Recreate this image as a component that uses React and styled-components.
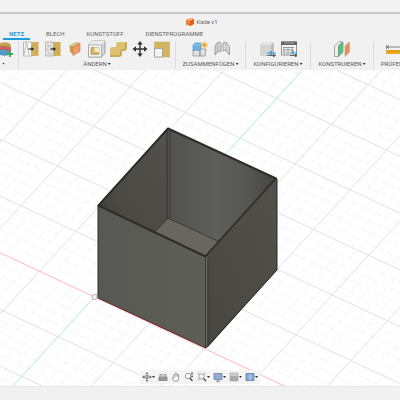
import styled, { createGlobalStyle } from "styled-components";

const GlobalStyle = createGlobalStyle`
  * {
    box-sizing: border-box;
  }
  body {
    margin: 0;
    background: #f1f1f1;
    font-family: Roboto, "Liberation Sans", sans-serif;
    font-size: 6px;
    color: #5a5a5a;
  }
`

const Page = styled.div`
  display: flex;
  flex-direction: column;
  min-height: 100vh;
  overflow: hidden;
`

const WindowEdge = styled.div`
  height: 14px;
  border-bottom: 2px solid #c9c9c9;
  background: #f2f2f2;
`

const TitleBar = styled.header`
  display: flex;
  align-items: center;
  justify-content: center;
  gap: 2px;
  height: 15px;
  padding-left: 4px;
  h1 {
    margin: 0;
    font-size: 6px;
    font-weight: 400;
  }
`

const Tabs = styled.nav`
  display: flex;
  gap: 10px;
  height: 11px;
  padding-left: 3px;
`

const Tab = styled.button`
  flex: none;
  padding: 0 6px;
  border: 0;
  border-bottom: 2px solid ${({$active}) => $active ? "#1f9bd8" : "transparent"};
  background: none;
  color: ${({$active}) => $active ? "#1f9bd8" : "#626262"};
  font: ${({$active}) => $active ? 700 : 400} 6px/9px Roboto, "Liberation Sans", sans-serif;
`

const Toolbar = styled.div`
  display: flex;
  height: 30px;
  padding: 1px 0;
  overflow: hidden;
`

const Group = styled.div`
  display: flex;
  flex: none;
  flex-direction: column;
  align-items: ${({$clipped}) => $clipped ? "flex-end" : "center"};
  width: ${({$width}) => $width}px;
  padding-right: ${({$clipped}) => $clipped ? 5 : 0}px;
  border-right: 1px solid #dcdcdc;
  &:last-child {
    border: 0;
  }
`

const Tools = styled.div`
  display: flex;
  gap: 6px;
`

const IconButton = styled.button`
  display: flex;
  flex: none;
  padding: 0;
  border: 0;
  background: none;
  svg {
    overflow: visible;
  }
`

const GroupMenu = styled.button`
  display: flex;
  align-items: center;
  gap: 1px;
  height: 13px;
  padding: 1px ${({$clipped}) => $clipped ? 8 : 0}px 0 0;
  border: 0;
  background: none;
  color: #5a5a5a;
  font: 400 6px/12px Roboto, "Liberation Sans", sans-serif;
`

const Caret = styled.span`
  width: 3px;
  height: 2px;
  background: #333;
  clip-path: polygon(0 0, 100% 0, 50% 100%);
`

const Canvas = styled.main`
  display: flex;
  flex: 1;
  position: relative;
  background: #fff;
  > svg {
    flex: 1;
    min-width: 0;
  }
`

const ViewBar = styled.div`
  position: absolute;
  bottom: 2px;
  left: 50%;
  display: flex;
  gap: 3px;
  padding: 2px;
  transform: translateX(-50%);
  background: #f4f4f4;
`

const ViewButton = styled(IconButton)`
  align-items: center;
`

const StatusBar = styled.footer`
  height: 14px;
  border-top: 1px solid #e6e6e6;
  background: #f1f1f1;
`

function Icon({size = 16, children}) {
    return (
        <svg width={size} height={size} viewBox={`0 0 ${size} ${size}`} fill="none" aria-hidden="true">
            {children}
        </svg>
    )
}

const gold = "#d3b561"

const meshHalf = (
    <>
        <path d="M8.5 1h7v14h-7z" fill={gold}/>
        <path d="M8.5 6l7-5M8.5 11l7-6M8.5 15l7-6M8.5 2l7 7M10 9l5.500 5" stroke="#b99a45" strokeWidth=".6"/>
    </>
)

const arrow = (
    <>
        <path d="M5.500 8h4" stroke="#222" strokeWidth="1.200"/>
        <path d="M8.500 6l2.500 2-2.500 2z" fill="#222"/>
    </>
)

const icons = {
    faceGroups: (
        <Icon>
            <path d="M1 3q6-3 11-1l2 2v4H1z" fill="#c5a250"/>
            <path d="M1 6q7-2 13 1v3H1z" fill="#d65c5e"/>
            <path d="M1 9q7-2 11 1v4q-6 2-11-1z" fill="#5799c9"/>
            <path d="M1 6q7-2 13 1M1 9q7-2 12 1" stroke="#8b6f50" strokeWidth=".6"/>
            <path d="M13 10v6M10 13h6" stroke="#36a958" strokeWidth="1.800"/>
        </Icon>
    ),
    remesh: (
        <Icon>
            <path d="M.5 1h8v14h-8z" fill="#f7f7f7" stroke="#a5a5a5" strokeWidth=".7"/>
            <path d="M1 14L3.500 1.500 6 14" stroke="#a8a8a8" strokeWidth=".7"/>
            {meshHalf}
            {arrow}
        </Icon>
    ),
    reduce: (
        <Icon>
            <path d="M.5 1h8v14h-8z" fill="#f2f2f2" stroke="#a0a0a0" strokeWidth=".7"/>
            <path d="M1 5h7M1 9h7M1 13h7M3 1v14M6 1v14M1 1l7 8M1 8l6 7M8 1L1 9" stroke="#b0b0b0" strokeWidth=".5"/>
            {meshHalf}
            {arrow}
        </Icon>
    ),
    planeCut: (
        <Icon>
            <path d="M2.500 5L9 1.500 13 2.500 7 6z" fill="#dfc67d" stroke="#a48a48" strokeWidth=".5"/>
            <path d="M2.500 5L7 6v8l-4-3z" fill="#c5a250"/>
            <path d="M5 6.500l8-4v8l-7 4z" fill="#ec9b69" stroke="#b97550" strokeWidth=".6"/>
        </Icon>
    ),
    shell: (
        <Icon>
            <path d="M-.500 4L3 0h13v12L12.500 16H-.500z" fill="#d4d4d4" stroke="#888" strokeWidth=".7"/>
            <path d="M-.500 4L3 0h13l-3.500 4z" fill="#ececec"/>
            <path d="M-.500 4h13v12h-13z" fill="#f7f7f7" stroke="#999" strokeWidth=".7"/>
            <path d="M2 6.500h8v7H2z" fill={gold} stroke="#9b8552" strokeWidth=".6"/>
            <path d="M5.500 6.500H10V11H5.500z" fill="#f3ead0"/>
        </Icon>
    ),
    combine: (
        <Icon>
            <path d="M-1 8l2-2h4V3l2-2h9v7l-2 2h-3v4l-2 2H-1z" fill="#c9a94f"/>
            <path d="M-1 8l2-2h4V3l2-2h9l-2 2v5h-3l-2 2v4h-10z" fill="#dcc074"/>
        </Icon>
    ),
    move: (
        <Icon>
            <path d="M7 2v12M1 8h12" stroke="#333" strokeWidth="1.400"/>
            <path d="M7 0l2.700 3.500H4.300zM7 16l2.700-3.500H4.300zM-.500 8L3 5.300v5.400zM14.500 8L11 5.300v5.400z" fill="#333"/>
        </Icon>
    ),
    scale: (
        <Icon>
            <path d="M-.500 1H14.500v15H-.500z" fill={gold} stroke="#c0a04e" strokeWidth=".5"/>
            <path d="M-.500 7.500h8V16h-8z" fill="#f5f5f5" stroke="#999" strokeWidth=".8"/>
        </Icon>
    ),
    component: (
        <Icon>
            <path d="M1 9h7v6H1zM8 8h6l-1 7H8z" fill="#e1e1e1" stroke="#888" strokeWidth=".7"/>
            <path d="M1 4l2-2h6v6L8 9H1z" fill="#70b4e2" stroke="#458abb" strokeWidth=".6"/>
            <path d="M1 4h6l2-2" stroke="#a7d5f1" strokeWidth=".6"/>
            <path d="M12.500.500v7M9 4h7M10 1.500l5 5M15 1.500l-5 5" stroke="#e2a130" strokeWidth=".8"/>
            <circle cx="12.500" cy="4" r="2" fill="#f5ab25"/>
        </Icon>
    ),
    joint: (
        <Icon>
            <path d="M1 14V5l2-3 3-1 1 2v8l-3-1z" fill="#d2d2d2" stroke="#888" strokeWidth=".7"/>
            <path d="M3.500 2v8.500L1 14" stroke="#999" strokeWidth=".6"/>
            <path d="M15.500 14V6L13 2l-3-1-1 2v7l3-1z" fill="#dcdcdc" stroke="#888" strokeWidth=".7"/>
            <path d="M12 2.500V9l3.500 5" stroke="#999" strokeWidth=".6"/>
        </Icon>
    ),
    configure: (
        <Icon>
            <path d="M1 4l3-3h11v11l-3 3H1z" fill="#bdbdbd"/>
            <path d="M1 4h11v11H1z" fill="#d4d4d4"/>
            <path d="M1 4l3-3h11l-3 3z" fill="#e5e5e5"/>
            <path d="M8 12h9" stroke="#3b91bb" strokeWidth="1"/>
            <path d="M8 14.500h9" stroke="#666" strokeWidth="1"/>
            <path d="M11 10h2v4h-2z" fill="#4ba4cf"/>
            <path d="M14 13h1.500v3H14z" fill="#555"/>
        </Icon>
    ),
    table: (
        <Icon>
            <path d="M.500 1h15v13H.500z" fill="#f6f6f6" stroke="#777" strokeWidth=".8"/>
            <path d="M0 .500h16V4H0z" fill="#666"/>
            <path d="M3 2h10" stroke="#aaa" strokeWidth=".8"/>
            <path d="M3 6v6M7 6v6M11 6v5M2 6.500h11M2 9h11M2 12h7" stroke="#777" strokeWidth=".7"/>
            <path d="M9 12h7" stroke="#3b91bb" strokeWidth="1"/>
            <path d="M9 14.500h7" stroke="#666" strokeWidth="1"/>
            <path d="M11 10h2v3h-2z" fill="#4ba4cf"/>
            <path d="M14 13h1.500v3H14z" fill="#555"/>
        </Icon>
    ),
    plane: (
        <Icon>
            <path d="M.500 5L5 .500h3L4.500 5v10.500h-4z" fill="#eee" stroke="#888" strokeWidth=".7"/>
            <path d="M4.500 5L9 1v10l-4.500 4.500z" fill="#59c184" stroke="#4b9b6c" strokeWidth=".6"/>
            <path d="M11 5l4.500-4v10L11 15.500z" fill="#e58f5d" stroke="#d88c62" strokeWidth=".5"/>
        </Icon>
    ),
    measure: (
        <Icon>
            <path d="M0 9h16v4H0z" fill="#eba91f"/>
            <path d="M2 9v2M4 9v2M6 9v2M8 9v2M10 9v2M12 9v2M14 9v2" stroke="#ad7b20" strokeWidth=".5"/>
            <path d="M.500 4v4M1 6h15M3 4.500L1 6l2 1.500" stroke="#666" strokeWidth=".8"/>
        </Icon>
    ),
}

const viewIcons = {
    orbit: (
        <Icon size={10}>
            <path d="M5 1v8M1 5h8" stroke="#777" strokeWidth=".8"/>
            <ellipse cx="5" cy="5" rx="3" ry="1.500" stroke="#888" strokeWidth=".8"/>
            <path d="M5 0l1.500 2h-3zM5 10l1.500-2h-3zM0 5l2-1.500v3zM10 5L8 3.500v3z" fill="#777"/>
        </Icon>
    ),
    lookAt: (
        <Icon size={10}>
            <path d="M1 5h8v3.500H1z" fill="#aaa" stroke="#777" strokeWidth=".8"/>
            <path d="M2 4.500V2.500h2v2M6 4.500V2.500h2v2M1 7h8" stroke="#888" strokeWidth=".9"/>
        </Icon>
    ),
    pan: (
        <Icon size={10}>
            <path d="M3 9L1 6q0-1 2 0V2.500q.500-1 1 0V1.500q.500-1 1.200 0V2q.500-1 1.200 0v1q.600-.500 1.200 0v3.500L7 9z" fill="#fff" stroke="#777" strokeWidth=".7"/>
            <path d="M4 2.500V5M5.200 2v3M6.400 3v2" stroke="#888" strokeWidth=".5"/>
        </Icon>
    ),
    zoom: (
        <Icon size={10}>
            <circle cx="4" cy="4" r="2.700" fill="#f9f9f9" stroke="#888" strokeWidth=".8"/>
            <path d="M5.800 6l2.700 3" stroke="#444" strokeWidth="1.200"/>
            <path d="M8 1v4M7 2l1-1.500L9 2M7 4l1 1.500L9 4" stroke="#555" strokeWidth=".7"/>
        </Icon>
    ),
    fit: (
        <Icon size={10}>
            <path d="M1 3V1h2M6 1h2v2M1 6v2h2" stroke="#aaa" strokeWidth=".6"/>
            <circle cx="4.500" cy="4.500" r="2.600" fill="#f9f9f9" stroke="#888" strokeWidth=".8"/>
            <path d="M6.500 6.500L9 9" stroke="#444" strokeWidth="1.200"/>
        </Icon>
    ),
    display: (
        <Icon size={10}>
            <path d="M1 1.500h8v6H1z" fill="#8eafd9" stroke="#777c88" strokeWidth=".8"/>
            <path d="M5 8v1M3 9.300h4" stroke="#777" strokeWidth=".8"/>
        </Icon>
    ),
    grid: (
        <Icon size={10}>
            <path d="M1 1h8v8H1z" fill="#aaa"/>
            <path d="M1 1h8v3H1z" fill="#cdcdcd"/>
            <path d="M1 1h8v8H1z" stroke="#999" strokeWidth=".5"/>
        </Icon>
    ),
    viewports: (
        <Icon size={10}>
            <path d="M1 1.500h8v7H1z" fill="#82a9d9" stroke="#61789f" strokeWidth=".8"/>
            <path d="M5 2v6" stroke="#dce8f6" strokeWidth=".8"/>
            <path d="M2 5h6" stroke="#a9c4e6" strokeWidth=".6"/>
        </Icon>
    ),
}

const groups = [
    {label: "", name: "Erstellen", width: 19, clipped: true, tools: ["faceGroups"]},
    {label: "ÄNDERN", width: 157, tools: ["remesh", "reduce", "planeCut", "shell", "combine", "move", "scale"]},
    {label: "ZUSAMMENFÜGEN", width: 70, tools: ["component", "joint"]},
    {label: "KONFIGURIEREN", width: 65, tools: ["configure", "table"]},
    {label: "KONSTRUIEREN", width: 63, tools: ["plane"]},
    {label: "PRÜFEN", width: 40, tools: ["measure"]},
]

const views = [
    ["orbit", true], ["lookAt", false], ["pan", false], ["zoom", false],
    ["fit", true], ["display", true], ["grid", true], ["viewports", true],
]

// ground plane: origin and the two steps from one major line to the next
const origin = [94.5, 297]
const across = [55, 25.8]
const away = [36.4, -39.7]

const point = (a, b) => [
    origin[0] + a * away[0] + b * across[0],
    origin[1] + a * away[1] + b * across[1],
].join(" ")

const gridPath = (keep) => {
    let d = ""
    for (let i = -50; i <= 50; i++) {
        if (!keep(i)) continue
        d += `M${point(i / 5, -10)}L${point(i / 5, 10)}M${point(-10, i / 5)}L${point(10, i / 5)}`
    }
    return d
}

const minor = gridPath(i => i % 5 !== 0)
const major = gridPath(i => i % 5 === 0 && i !== 0)

function Scene() {
    return (
        <svg viewBox="0 70 400 316" preserveAspectRatio="xMidYMid slice" fill="none" role="img" aria-label="Kiste">
            <defs>
                <linearGradient id="innerLeft" x1="0" y1="1" x2="1" y2="0">
                    <stop offset="0" stopColor="#3d3c39"/>
                    <stop offset=".3" stopColor="#4b4944"/>
                    <stop offset="1" stopColor="#53514c"/>
                </linearGradient>
                <linearGradient id="innerRight">
                    <stop offset="0" stopColor="#51514d"/>
                    <stop offset=".45" stopColor="#5e5f5a"/>
                    <stop offset=".75" stopColor="#555651"/>
                    <stop offset="1" stopColor="#454542"/>
                </linearGradient>
                <linearGradient id="front">
                    <stop offset="0" stopColor="#575853"/>
                    <stop offset="1" stopColor="#5f5f59"/>
                </linearGradient>
                <linearGradient id="side" x1="0" y1="1" x2="1" y2="0">
                    <stop offset="0" stopColor="#484641"/>
                    <stop offset="1" stopColor="#545049"/>
                </linearGradient>
            </defs>
            <path d={minor} stroke="#f1f1f1" strokeWidth=".8" strokeDasharray="7 2"/>
            <path d={major} stroke="#d9d9d9" strokeWidth=".8"/>
            <path d={`M${point(0, -5)}L${point(0, 8)}`} stroke="#ffa4a8" strokeWidth=".8"/>
            <path d={`M${point(-5, 0)}L${point(8, 0)}`} stroke="#96f29a" strokeWidth=".8"/>
            <path d="M168 128L276 178V270L206 348 98 298V205z" fill="#4a4945"/>
            <path d="M168 129V218L154 233 98 206z" fill="url(#innerLeft)"/>
            <path d="M168 129L275 179 219 243 168 218z" fill="url(#innerRight)"/>
            <path d="M168 218L220 242 205 257 154 233z" fill="#69665f"/>
            <path d="M98 206L205 257V348L98 298z" fill="url(#front)"/>
            <path d="M208 256L277 179V270L208 347z" fill="url(#side)"/>
            <path d="M205 257L208 256V347L205 348z" fill="#6a6a63"/>
            <path d="M205.500 258V348M207.800 257V346" stroke="#292927" strokeWidth=".8"/>
            <path d="M167.200 131V219M170 131V218M154 233L168 218 220 242" stroke="#30302d" strokeWidth=".8"/>
            <path d="M98.500 205.500L168 128.500 276 178.500 205.500 256.500z" stroke="#2d2d2a" strokeWidth="2" strokeLinejoin="round"/>
            <path d="M98 205V298M206 348L277 270V179" stroke="#292927" strokeWidth="1"/>
            <path d="M98 298L206 348" stroke="#632b30" strokeWidth="1"/>
            <path d="M208 255L275 181" stroke="#686761" strokeWidth=".4"/>
            <circle cx="94.500" cy="297" r="2.500" fill="#fff" fillOpacity=".7" stroke="#aaa"/>
        </svg>
    )
}

function ToolGroup({group}) {
    return (
        <Group $width={group.width} $clipped={group.clipped}>
            <Tools>
                {group.tools.map(tool => (
                    <IconButton key={tool} aria-label={tool}>{icons[tool]}</IconButton>
                ))}
            </Tools>
            <GroupMenu $clipped={group.clipped} aria-label={group.name}>
                {group.label}
                <Caret/>
            </GroupMenu>
        </Group>
    )
}

function App() {
    return (
        <Page>
            <GlobalStyle/>
            <WindowEdge/>
            <TitleBar>
                <Icon size={8}>
                    <path d="M0 2l4-2 4 1v5L4 8 0 6.500z" fill="#f27a35"/>
                    <path d="M0 2l4-2 4 1-4 2z" fill="#ffb078"/>
                    <path d="M4 3l4-2v5L4 8z" fill="#df5d20"/>
                </Icon>
                <h1>Kiste v1</h1>
            </TitleBar>
            <Tabs>
                <Tab $active>NETZ</Tab>
                <Tab>BLECH</Tab>
                <Tab>KUNSTSTOFF</Tab>
                <Tab>DIENSTPROGRAMME</Tab>
            </Tabs>
            <Toolbar>
                {groups.map(group => <ToolGroup key={group.width} group={group}/>)}
            </Toolbar>
            <Canvas>
                <Scene/>
                <ViewBar>
                    {views.map(([view, menu]) => (
                        <ViewButton key={view} aria-label={view}>
                            {viewIcons[view]}
                            {menu && <Caret/>}
                        </ViewButton>
                    ))}
                </ViewBar>
            </Canvas>
            <StatusBar/>
        </Page>
    )
}

export default App
